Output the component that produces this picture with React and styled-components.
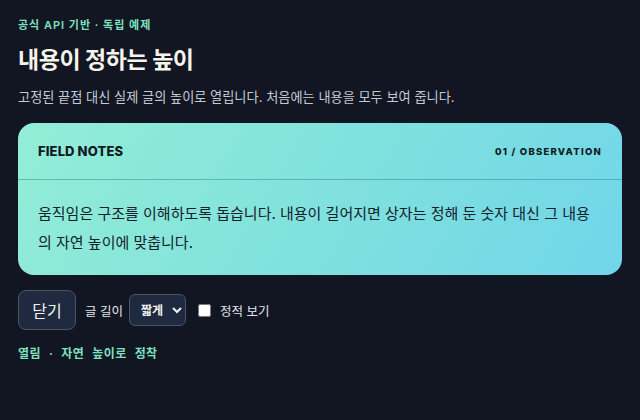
import { useState } from "react";
import styled, { createGlobalStyle } from "styled-components";

const GlobalStyle = createGlobalStyle`
  html, body {
    margin: 0;
    background: #111622;
  }
  body {
    font-family: "Inter", "Noto Sans CJK KR", sans-serif;
    color: #e5e7eb;
  }
`;

const Page = styled.div`
  padding: 17px 18px;
`;

const Eyebrow = styled.div`
  font-size: 11px;
  font-weight: 600;
  color: #7ee0bf;
  letter-spacing: 0.09em;
  line-height: 16px;
`;

const Title = styled.h1`
  margin: 11px 0 0;
  font-size: 23px;
  font-weight: 700;
  color: #f6f3ec;
  letter-spacing: -0.02em;
  line-height: 32px;
`;

const Lead = styled.p`
  margin: 11px 0 0;
  font-size: 13.2px;
  color: #c4cad4;
  line-height: 20px;
`;

const Card = styled.section`
  margin-top: 16px;
  border-radius: 16px;
  background: linear-gradient(120deg, #93eed6 0%, #7fe0de 55%, #70d6ea 100%);
  color: #0f1a22;
  overflow: hidden;
`;

const CardHead = styled.header`
  display: flex;
  justify-content: space-between;
  align-items: center;
  height: 56px;
  padding: 0 20px;
  border-bottom: 1px solid rgba(30, 90, 100, 0.35);
`;

const HeadTitle = styled.span`
  font-size: 13px;
  font-weight: 800;
  letter-spacing: 0.01em;
`;

const HeadMeta = styled.span`
  font-size: 9.5px;
  font-weight: 800;
  letter-spacing: 0.13em;
`;

const CardBody = styled.div`
  padding: 19px 20px 18px;
  font-size: 15px;
  line-height: 29px;
  color: #14202a;
`;

const Controls = styled.div`
  display: flex;
  align-items: center;
  gap: 9px;
  margin-top: 15px;
`;

const Button = styled.button`
  height: 40px;
  width: 58px;
  padding: 0;
  font-family: inherit;
  font-size: 16px;
  color: #f1f1f1;
  background: #1f2a40;
  border: 1px solid #4b5568;
  border-radius: 8px;
`;

const Label = styled.label`
  display: flex;
  align-items: center;
  gap: 6px;
  font-size: 12.5px;
  color: #e3e5ea;
`;

const Select = styled.select`
  height: 32px;
  width: 57px;
  padding: 0 4px 0 7px;
  font-family: inherit;
  font-size: 12px;
  font-weight: 600;
  color: #f1f1f1;
  background: #1f2a40;
  border: 1px solid #4b5568;
  border-radius: 6px;
`;

const Check = styled.label`
  display: flex;
  align-items: center;
  gap: 9px;
  margin-left: 3px;
  font-size: 12.5px;
  color: #e3e5ea;

  input {
    margin: 0;
    width: 13px;
    height: 13px;
  }
`;

const Status = styled.div`
  margin-top: 14px;
  font-size: 12px;
  font-weight: 600;
  color: #7ee0bf;
  letter-spacing: 0.03em;
  word-spacing: 0.4em;
`;

export default function App() {
  const [open, setOpen] = useState(true);
  const [len, setLen] = useState("short");
  const [still, setStill] = useState(false);

  return (
    <Page>
      <GlobalStyle />
      <Eyebrow>공식 API 기반 · 독립 예제</Eyebrow>
      <Title>내용이 정하는 높이</Title>
      <Lead>고정된 끝점 대신 실제 글의 높이로 열립니다. 처음에는 내용을 모두 보여 줍니다.</Lead>
      {open && (
        <Card>
          <CardHead>
            <HeadTitle>FIELD NOTES</HeadTitle>
            <HeadMeta>01 / OBSERVATION</HeadMeta>
          </CardHead>
          <CardBody>
            움직임은 구조를 이해하도록 돕습니다. 내용이 길어지면 상자는 정해 둔 숫자 대신 그 내용의 자연 높이에 맞춥니다.
          </CardBody>
        </Card>
      )}
      <Controls>
        <Button onClick={() => setOpen(!open)}>{open ? "닫기" : "열기"}</Button>
        <Label>
          글 길이
          <Select value={len} onChange={(e) => setLen(e.target.value)}>
            <option value="short">짧게</option>
            <option value="long">길게</option>
          </Select>
        </Label>
        <Check>
          <input type="checkbox" checked={still} onChange={(e) => setStill(e.target.checked)} />
          정적 보기
        </Check>
      </Controls>
      <Status>열림 · 자연 높이로 정착</Status>
    </Page>
  );
}
